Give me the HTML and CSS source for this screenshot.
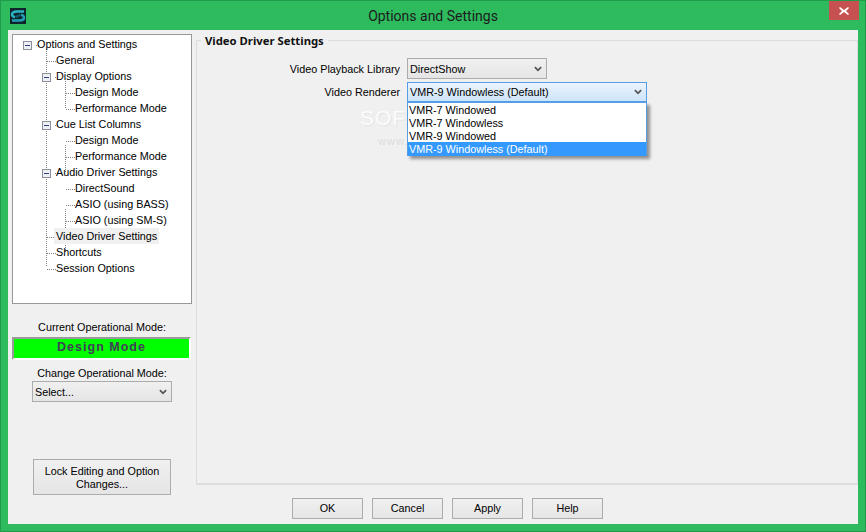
FILE: index.html
```html
<!DOCTYPE html>
<html lang="en">
<head>
<meta charset="utf-8">
<title>Options and Settings</title>
<link rel="stylesheet" href="styles.css">
</head>
<body>
<div class="window">
  <header class="titlebar">
    <svg class="app-icon" width="16" height="16" viewBox="0 0 16 16">
      <rect width="16" height="16" fill="#10242c"/>
      <path d="M14 3.500H6.500C3.500 3.500 2 5 2 6.500S3.500 9 5 9" fill="none" stroke="#2bb3c4" stroke-width="2.600"/>
      <path d="M2 12.500H9.500C12.500 12.500 14 11 14 9.500S12.500 7 11 7" fill="none" stroke="#1f9fb3" stroke-width="2.600"/>
      <path d="M5.500 9L10.500 7" stroke="#0c5f70" stroke-width="2"/>
    </svg>
    <h1 class="title">Options and Settings</h1>
    <div class="close"><svg width="10" height="8" viewBox="0 0 10 8"><path d="M1 0l4 3 4-3 1 1-3 3 3 3-1 1-4-3-4 3-1-1 3-3-3-3z" fill="#fff"/></svg></div>
  </header>
  <div class="client">
    <aside class="sidebar">
      <div class="tree">
        <svg class="tree-lines" width="176" height="266" viewBox="0 0 176 266">
          <g fill="none" stroke="#808080" stroke-dasharray="1 1">
            <path d="M32.500 13V231M51.500 45V73M51.500 109V137M51.500 173V217"/>
            <path d="M22 9.500h3M33 25.500h10M41 41.500h3M52 57.500h10M52 73.500h10M41 89.500h3M52 105.500h10M52 121.500h10M41 137.500h3M52 153.500h10M52 169.500h10M52 185.500h10M33 201.500h10M33 217.500h10M33 233.500h10"/>
          </g>
          <g fill="#eef0f6" stroke="#8b8f9c">
            <rect x="9.500" y="5.500" width="8" height="8"/>
            <rect x="28.500" y="37.500" width="8" height="8"/>
            <rect x="28.500" y="85.500" width="8" height="8"/>
            <rect x="28.500" y="133.500" width="8" height="8"/>
          </g>
          <path d="M11 9.500h5M30 41.500h5M30 89.500h5M30 137.500h5" stroke="#33418c"/>
        </svg>
        <div class="node l0">Options and Settings</div>
        <div class="node l1">General</div>
        <div class="node l1">Display Options</div>
        <div class="node l2">Design Mode</div>
        <div class="node l2">Performance Mode</div>
        <div class="node l1">Cue List Columns</div>
        <div class="node l2">Design Mode</div>
        <div class="node l2">Performance Mode</div>
        <div class="node l1">Audio Driver Settings</div>
        <div class="node l2">DirectSound</div>
        <div class="node l2">ASIO (using BASS)</div>
        <div class="node l2">ASIO (using SM-S)</div>
        <div class="node l1"><span class="selected">Video Driver Settings</span></div>
        <div class="node l1">Shortcuts</div>
        <div class="node l1">Session Options</div>
      </div>
      <div class="mode-label first">Current Operational Mode:</div>
      <div class="mode-display">Design Mode</div>
      <div class="mode-label second">Change Operational Mode:</div>
      <div class="combo mode-select"><span>Select...</span><svg class="chev" width="8" height="6" viewBox="0 0 9 6"><path d="M1 1l3.500 3.500L8 1" fill="none" stroke="#555" stroke-width="2"/></svg></div>
      <button class="btn lock">Lock Editing and Option Changes...</button>
    </aside>
    <main class="main">
      <section class="panel">
        <h2 class="panel-title">Video Driver Settings</h2>
        <div class="watermark">SOFTPEDIA<small>www.softpedia.com</small></div>
        <div class="field first-field">
          <label class="field-label">Video Playback Library</label>
          <div class="combo lib"><span>DirectShow</span><svg class="chev" width="8" height="6" viewBox="0 0 9 6"><path d="M1 1l3.500 3.500L8 1" fill="none" stroke="#555" stroke-width="2"/></svg></div>
        </div>
        <div class="field">
          <label class="field-label">Video Renderer</label>
          <div class="combo renderer"><span>VMR-9 Windowless (Default)</span><svg class="chev" width="8" height="6" viewBox="0 0 9 6"><path d="M1 1l3.500 3.500L8 1" fill="none" stroke="#555" stroke-width="2"/></svg>
            <ul class="dropdown">
              <li>VMR-7 Windowed</li>
              <li>VMR-7 Windowless</li>
              <li>VMR-9 Windowed</li>
              <li class="active">VMR-9 Windowless (Default)</li>
            </ul>
          </div>
        </div>
      </section>
      <footer class="actions">
        <button class="btn">OK</button>
        <button class="btn">Cancel</button>
        <button class="btn">Apply</button>
        <button class="btn">Help</button>
      </footer>
    </main>
  </div>
</div>
</body>
</html>
```
FILE: styles.css
```css
* { box-sizing: border-box; }
html, body { margin: 0; padding: 0; }
body {
  width: 866px;
  height: 532px;
  overflow: hidden;
  font-family: "Liberation Sans", Arial, sans-serif;
  font-size: 10.800px;
  color: #000;
}
.window {
  width: 866px;
  height: 532px;
  display: flex;
  flex-direction: column;
  background: #2dbb5e;
  border: 1px solid #229a4c;
  padding: 0 7px 7px;
}
.titlebar {
  height: 29px;
  flex: none;
  display: flex;
  align-items: flex-start;
  position: relative;
}
.app-icon { margin: 7px 0 0 2px; }
.title {
  position: absolute;
  left: 0;
  right: 0;
  top: 6px;
  margin: 0;
  text-align: center;
  font-family: Roboto, sans-serif;
  font-weight: 400;
  font-size: 14px;
  line-height: 18px;
  color: #1c1c1c;
}
.close {
  position: absolute;
  right: -1px;
  top: 0;
  width: 30px;
  height: 19px;
  background: #c75050;
  display: flex;
  align-items: center;
  justify-content: center;
}
.client {
  flex: 1;
  display: flex;
  background: #f0f0f0;
  min-height: 0;
}
.sidebar {
  width: 188px;
  flex: none;
  padding: 4px 0 0 4px;
  display: flex;
  flex-direction: column;
}
.tree {
  width: 180px;
  height: 270px;
  background: #fff;
  border: 1px solid #989898;
  padding: 1px;
  position: relative;
}
.tree-lines { position: absolute; left: 1px; top: 1px; }
.node {
  height: 16px;
  line-height: 16px;
  white-space: nowrap;
  position: relative;
}
.l0 { padding-left: 23px; }
.l1 { padding-left: 42px; }
.l2 { padding-left: 61px; }
.selected { background: #f0f0f0; display: inline-block; padding: 0 2px; margin-left: -2px; }
.mode-label {
  width: 180px;
  text-align: center;
  line-height: 16px;
}
.mode-label.first { margin-top: 15px; }
.mode-label.second { margin-top: 5px; }
.mode-display {
  width: 179px;
  height: 23px;
  margin-top: 2px;
  background: #00ff00;
  border: 2px solid;
  border-color: #9a9a9a #fff #fff #9a9a9a;
  text-align: center;
  font-weight: 700;
  font-size: 12.500px;
  letter-spacing: 1px;
  line-height: 17px;
  color: #404058;
}
.combo {
  height: 21px;
  border: 1px solid #acacac;
  background: linear-gradient(#f0f0f0, #e5e5e5);
  display: flex;
  align-items: center;
  justify-content: space-between;
  padding: 0 4px 0 2px;
  position: relative;
  line-height: 16px;
}
.mode-select { width: 140px; margin: 0 0 0 20px; }
.btn {
  border: 1px solid #acacac;
  background: linear-gradient(#f0f0f0, #e5e5e5);
  font: inherit;
  color: #000;
  line-height: 13px;
  padding: 0;
}
.lock {
  width: 138px;
  height: 36px;
  margin: 57px 0 0 21px;
  padding: 1px 8px 0;
}
.main {
  flex: 1;
  display: flex;
  flex-direction: column;
  min-width: 0;
}
.panel {
  height: 445px;
  margin-top: 10px;
  border: solid #dcdcdc;
  border-width: 1px 1px 2px 1px;
  position: relative;
  flex: none;
}
.panel-title {
  position: absolute;
  left: 4px;
  top: -8px;
  margin: 0;
  padding: 0 4px;
  background: #f0f0f0;
  font-family: "Noto Sans", sans-serif;
  font-size: 11.300px;
  font-weight: 700;
  line-height: 16px;
  color: #111;
}
.watermark {
  position: absolute;
  left: 163px;
  top: 65px;
  font-size: 21px;
  line-height: 24px;
  letter-spacing: 1px;
  color: #fcfcfc;
  text-shadow: 1px 1px 0 #e4e4e4;
}
.watermark small {
  display: block;
  font-size: 11px;
  line-height: 14px;
  letter-spacing: 1px;
  margin: 4px 0 0 18px;
  color: #dcdcdc;
  text-shadow: none;
}
.field {
  display: flex;
  align-items: center;
  gap: 7px;
  margin-top: 3px;
  position: relative;
}
.first-field { margin-top: 17px; }
.field-label {
  width: 203px;
  text-align: right;
}
.lib { width: 140px; }
.renderer {
  width: 240px;
  height: 20px;
  border-color: #569de5;
  background: linear-gradient(#ecf4fc, #cde4fa);
}
.dropdown {
  position: absolute;
  left: -1px;
  top: 19px;
  width: 240px;
  margin: 0;
  padding: 0;
  list-style: none;
  background: rgba(255, 255, 255, .94);
  border: 1px solid #569de5;
  border-bottom: 0;
  box-shadow: 3px 3px 3px rgba(0, 0, 0, .4);
  z-index: 2;
}
.dropdown li {
  height: 13px;
  line-height: 14px;
  padding-left: 1px;
}
.dropdown li.active {
  height: 14px;
  background: #3399ff;
  color: #fff;
}
.actions {
  display: flex;
  gap: 9px;
  padding: 13px 0 0 96px;
}
.actions .btn {
  width: 71px;
  height: 21px;
}
```
